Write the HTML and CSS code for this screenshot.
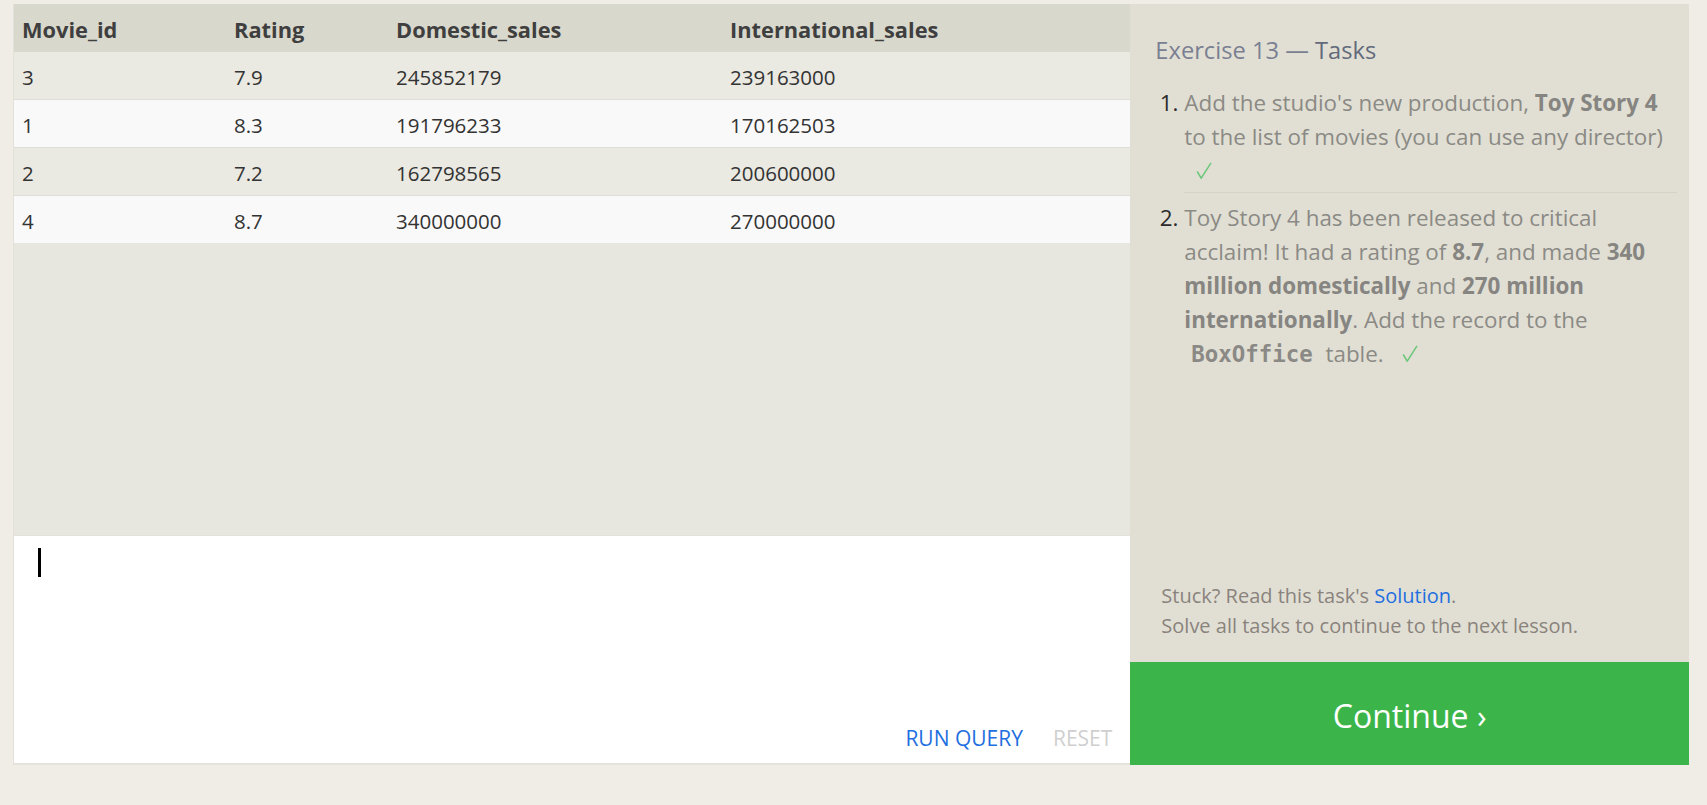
FILE: index.html
```html
<!DOCTYPE html>
<html lang="en">
<head>
<meta charset="utf-8">
<title>SQL Exercise 13</title>
<link rel="stylesheet" href="styles.css">
</head>
<body>
<div class="app">
  <div class="left">
    <div class="results">
      <table class="grid">
        <colgroup>
          <col class="c1"><col class="c2"><col class="c3"><col class="c4">
        </colgroup>
        <thead>
          <tr><th>Movie_id</th><th>Rating</th><th>Domestic_sales</th><th>International_sales</th></tr>
        </thead>
        <tbody>
          <tr><td>3</td><td>7.9</td><td>245852179</td><td>239163000</td></tr>
          <tr><td>1</td><td>8.3</td><td>191796233</td><td>170162503</td></tr>
          <tr><td>2</td><td>7.2</td><td>162798565</td><td>200600000</td></tr>
          <tr><td>4</td><td>8.7</td><td>340000000</td><td>270000000</td></tr>
        </tbody>
      </table>
    </div>
    <div class="editor">
      <div class="code"><span class="caret"></span></div>
      <div class="actions">
        <span class="run">RUN QUERY</span>
        <span class="reset">RESET</span>
      </div>
    </div>
  </div>
  <div class="right">
    <div class="tasks">
      <h2 class="title"><span class="ex">Exercise 13 — </span><span class="tk">Tasks</span></h2>
      <ol class="list">
        <li>Add the studio's new production, <b>Toy Story 4</b> to the list of movies (you can use any director) <span class="check"><svg width="16" height="17" viewBox="0 0 16 17"><path d="M1.2 9.5 L5.2 16.2 L15 0.8" fill="none" stroke="#6cc77a" stroke-width="1.5"/></svg></span></li>
        <li>Toy Story 4 has been released to critical acclaim! It had a rating of <b>8.7</b>, and made <b>340 million domestically</b> and <b>270 million internationally</b>. Add the record to the <code>BoxOffice</code> table. <span class="check"><svg width="16" height="17" viewBox="0 0 16 17"><path d="M1.2 9.5 L5.2 16.2 L15 0.8" fill="none" stroke="#6cc77a" stroke-width="1.5"/></svg></span></li>
      </ol>
      <div class="foot">
        <div>Stuck? Read this task's <a class="sol" href="#">Solution</a>.</div>
        <div>Solve all tasks to continue to the next lesson.</div>
      </div>
    </div>
    <div class="continue">Continue ›</div>
  </div>
</div>
</body>
</html>
```
FILE: styles.css
```css
html, body {
  margin: 0;
  padding: 0;
}
body {
  background: #efede6;
  font-family: "Open Sans", "Noto Sans", sans-serif;
}
.app {
  display: flex;
  padding: 4px 18px 0 13px;
  align-items: flex-start;
}
.left {
  width: 1117px;
  display: flex;
  flex-direction: column;
  border-left: 1px solid #e3e1d9;
  border-bottom: 2px solid #e4e2db;
}
.results {
  height: 531px;
  background: #e8e7df;
}
.grid {
  width: 100%;
  border-collapse: collapse;
  table-layout: fixed;
  font-size: 20.5px;
  line-height: 28px;
}
.c1 { width: 212px; }
.c2 { width: 162px; }
.c3 { width: 334px; }
.grid th {
  background: #d9d8cc;
  color: #3f3f3f;
  font-weight: 700;
  font-size: 21.8px;
  text-align: left;
  padding: 12px 8px 8px;
}
.grid td {
  color: #333;
  padding: 11px 8px 8px;
}
.grid tbody tr:nth-child(odd) td { background: #eae9e2; }
.grid tbody tr:nth-child(even) td { background: #f9f9f9; }
.grid tbody tr + tr td { border-top: 1px solid #dfddd6; }
.editor {
  height: 227px;
  background: #fff;
  border-top: 1px solid #e3e1d9;
  display: flex;
  flex-direction: column;
}
.code {
  flex: 1;
  padding: 12px 0 0 24px;
}
.caret {
  display: inline-block;
  width: 3px;
  height: 29px;
  background: #000;
}
.actions {
  display: flex;
  justify-content: flex-end;
  gap: 30px;
  padding: 0 18px 11px 0;
  font-size: 21px;
  line-height: 28px;
}
.run { color: #1f6fe0; }
.reset { color: #cfcfcf; }
.right {
  width: 559px;
  display: flex;
  flex-direction: column;
}
.tasks {
  height: 658px;
  background: #e1dfd4;
  padding: 30px 12px 0 25px;
  box-sizing: border-box;
  display: flex;
  flex-direction: column;
}
.title {
  margin: 0;
  font-weight: 400;
  font-size: 23.7px;
  line-height: 32px;
}
.ex { color: #7a8092; }
.tk { color: #626a7b; }
.list {
  margin: 20px 0 0;
  padding: 0 0 0 29px;
  font-size: 22.4px;
  line-height: 34px;
  color: #8b8a85;
}
.list li {
  padding: 0 0 4px;
}
.list li::marker {
  color: #2b2b2b;
}
.list li + li {
  border-top: 1px solid #d5d3c8;
  padding-top: 8px;
}
.list b {
  color: #868581;
  font-weight: 700;
}
.list code {
  font-family: "DejaVu Sans Mono", "Liberation Mono", monospace;
  font-weight: 700;
  font-size: 22.4px;
  color: #8a8985;
  padding: 0 7px;
}
.check {
  display: inline-block;
  margin-left: 12px;
  width: 16px;
  height: 17px;
}
.check svg {
  display: block;
}
.foot {
  margin-top: auto;
  padding: 0 0 21px 6px;
  font-size: 20px;
  line-height: 30px;
  color: #8a837d;
}
.sol {
  color: #1f6fe0;
  text-decoration: none;
}
.continue {
  height: 103px;
  background: #3bb54a;
  color: #fff;
  font-size: 32px;
  display: flex;
  align-items: center;
  justify-content: center;
  padding-top: 4px;
  box-sizing: border-box;
}
```
